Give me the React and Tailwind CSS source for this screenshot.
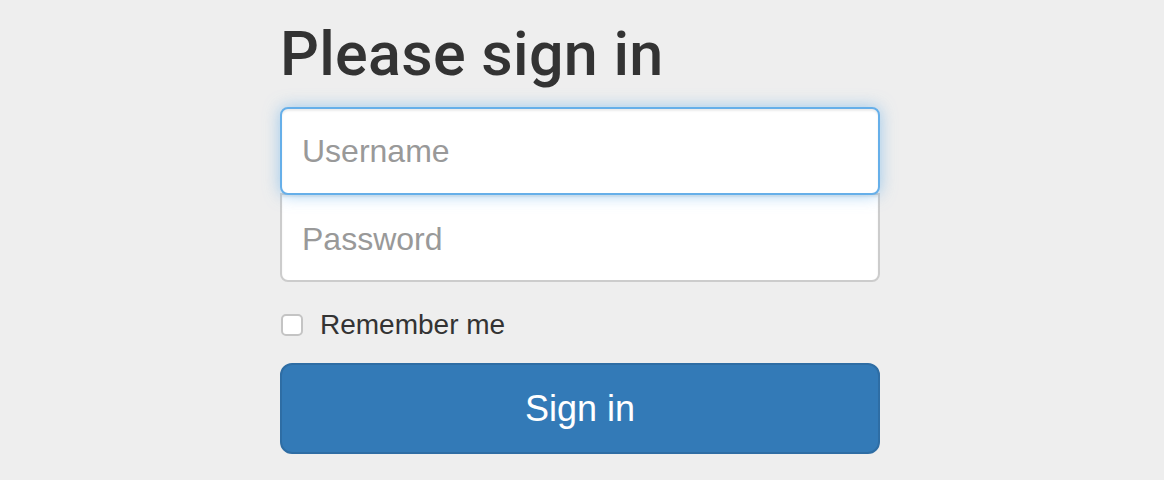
export default function App() {
  return (
    <div className="min-h-screen bg-[#eeeeee] font-['Liberation_Sans',Arial,sans-serif] text-[#333333]">
      <form className="ml-[280px] w-[600px] pt-[21px]" onSubmit={e => e.preventDefault()}>
        <h2 className="mb-[20px] font-['Roboto',Arial,sans-serif] text-[61px] leading-[66px] font-medium tracking-[0.3px] text-[#333333]">Please sign in</h2>

        <input
          type="text"
          placeholder="Username"
          className="relative z-10 -mb-[2px] block h-[88px] w-full rounded-[8px] border-2 border-[#66afe9] bg-white px-[20px] text-[32px] text-[#555555] placeholder:text-[#999999] outline-none shadow-[inset_0_2px_2px_rgba(0,0,0,0.075),0_0_16px_rgba(102,175,233,0.6)]"
        />
        <input
          type="password"
          placeholder="Password"
          className="block h-[89px] w-full rounded-b-[8px] border-2 border-[#cccccc] bg-white px-[20px] pt-[3px] text-[32px] text-[#555555] placeholder:text-[#999999] outline-none shadow-[inset_0_2px_2px_rgba(0,0,0,0.075)]"
        />

        <label className="mt-[23px] flex h-[40px] items-center text-[28px] leading-[40px] text-[#333333]">
          <span className="mr-[17px] ml-[1px] h-[22px] w-[22px] rounded-[5px] border-2 border-[#c4c4c4] bg-white" />
          Remember me
        </label>

        <button
          type="submit"
          className="mt-[18px] block h-[91px] w-full rounded-[12px] border-2 border-[#2e6da4] bg-[#337ab7] text-[36px] text-white"
        >
          Sign in
        </button>
      </form>
    </div>
  );
}
